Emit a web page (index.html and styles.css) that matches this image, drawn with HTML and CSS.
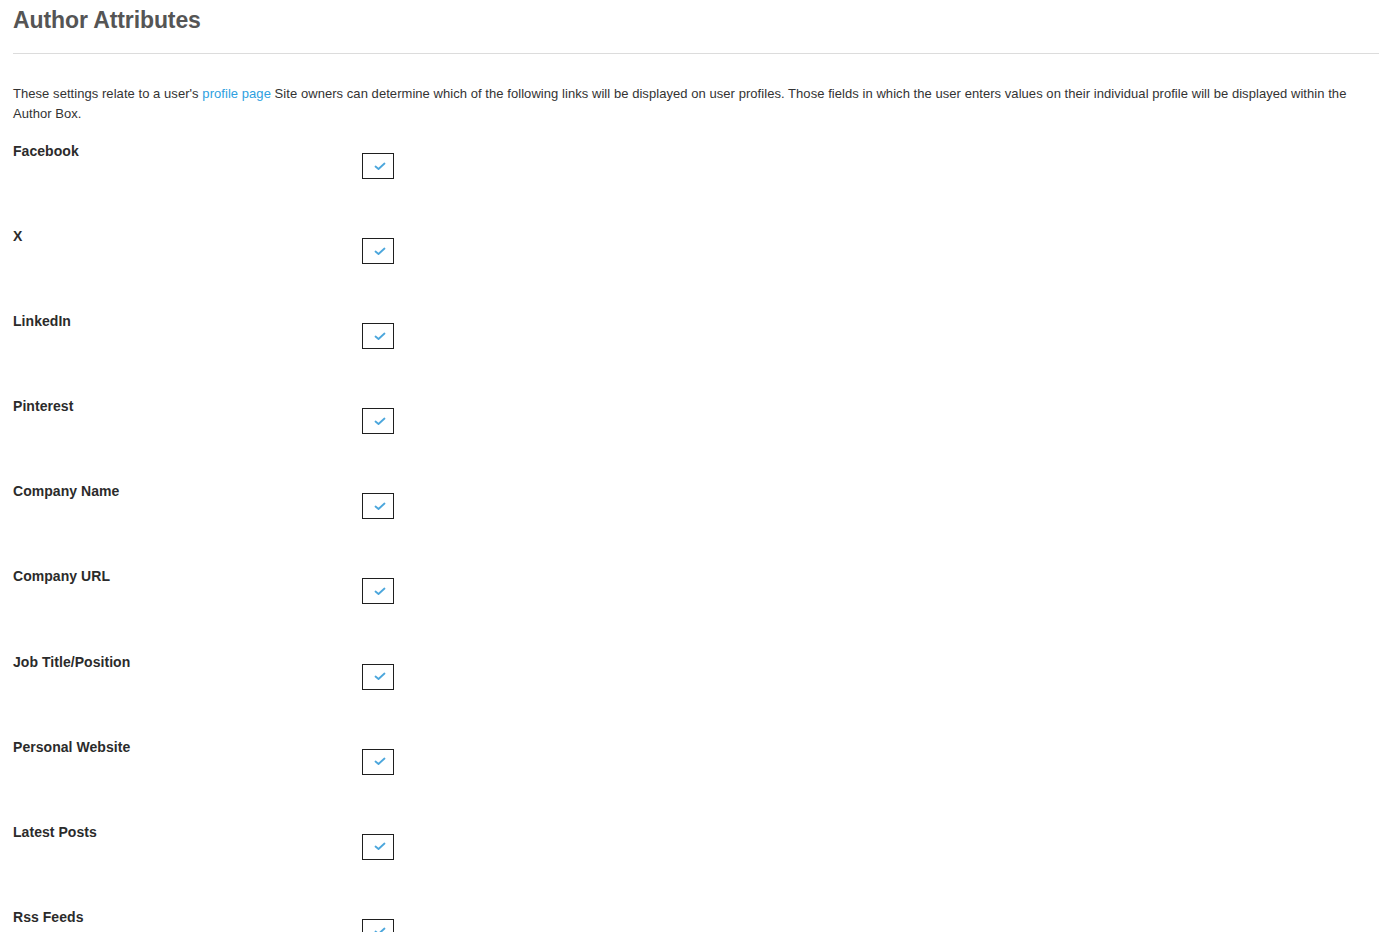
FILE: index.html
```html
<!DOCTYPE html>
<html lang="en">
<head>
<meta charset="utf-8">
<title>Author Attributes</title>
<link rel="stylesheet" href="styles.css">
</head>
<body>
<div class="page">
  <h2 class="title">Author Attributes</h2>
  <p class="intro">These settings relate to a user's <a href="#" class="link">profile page</a> Site owners can determine which of the following links will be displayed on user profiles. Those fields in which the user enters values on their individual profile will be displayed within the Author Box.</p>
  <div class="rows">
    <div class="row"><div class="label">Facebook</div><span class="check"><svg viewBox="0 0 12 9" width="12" height="9"><polyline points="1.5,4.5 4.5,7 10.5,1.5"/></svg></span></div>
    <div class="row"><div class="label">X</div><span class="check"><svg viewBox="0 0 12 9" width="12" height="9"><polyline points="1.5,4.5 4.5,7 10.5,1.5"/></svg></span></div>
    <div class="row"><div class="label">LinkedIn</div><span class="check"><svg viewBox="0 0 12 9" width="12" height="9"><polyline points="1.5,4.5 4.5,7 10.5,1.5"/></svg></span></div>
    <div class="row"><div class="label">Pinterest</div><span class="check"><svg viewBox="0 0 12 9" width="12" height="9"><polyline points="1.5,4.5 4.5,7 10.5,1.5"/></svg></span></div>
    <div class="row"><div class="label">Company Name</div><span class="check"><svg viewBox="0 0 12 9" width="12" height="9"><polyline points="1.5,4.5 4.5,7 10.5,1.5"/></svg></span></div>
    <div class="row"><div class="label">Company URL</div><span class="check"><svg viewBox="0 0 12 9" width="12" height="9"><polyline points="1.5,4.5 4.5,7 10.5,1.5"/></svg></span></div>
    <div class="row"><div class="label">Job Title/Position</div><span class="check"><svg viewBox="0 0 12 9" width="12" height="9"><polyline points="1.5,4.5 4.5,7 10.5,1.5"/></svg></span></div>
    <div class="row"><div class="label">Personal Website</div><span class="check"><svg viewBox="0 0 12 9" width="12" height="9"><polyline points="1.5,4.5 4.5,7 10.5,1.5"/></svg></span></div>
    <div class="row"><div class="label">Latest Posts</div><span class="check"><svg viewBox="0 0 12 9" width="12" height="9"><polyline points="1.5,4.5 4.5,7 10.5,1.5"/></svg></span></div>
    <div class="row"><div class="label">Rss Feeds</div><span class="check"><svg viewBox="0 0 12 9" width="12" height="9"><polyline points="1.5,4.5 4.5,7 10.5,1.5"/></svg></span></div>
  </div>
</div>
</body>
</html>
```
FILE: styles.css
```css
html, body {
  margin: 0;
  padding: 0;
  background: #fff;
}
body {
  font-family: "Liberation Sans", Arial, sans-serif;
  color: #333;
}
.page {
  padding-left: 13px;
}
.title {
  margin: 0;
  padding: 7px 0 19px;
  font-size: 23px;
  line-height: 27px;
  font-weight: bold;
  color: #555;
  border-bottom: 1px solid #dcdcdc;
  letter-spacing: -0.1px;
}
.intro {
  margin: 30px 0 0;
  font-size: 13px;
  line-height: 20px;
  color: #333;
  padding-right: 20px;
  letter-spacing: 0.055px;
}
.link {
  color: #2e9fdf;
  text-decoration: none;
}
.rows {
  margin-top: 17px;
}
.row {
  display: flex;
  align-items: flex-start;
  height: 85.1px;
}
.label {
  width: 349px;
  flex: none;
  font-size: 14px;
  line-height: 20px;
  font-weight: bold;
  color: #2b2b2b;
  letter-spacing: 0.05px;
}
.check {
  margin-top: 12px;
  width: 32px;
  height: 26px;
  box-sizing: border-box;
  border: 1px solid #1f1f1f;
  display: flex;
  align-items: center;
  justify-content: center;
  padding-left: 3px;
}
.check svg {
  display: block;
  fill: none;
  stroke: #4ba6dc;
  stroke-width: 1.8;
  stroke-linecap: round;
  stroke-linejoin: round;
}
```
